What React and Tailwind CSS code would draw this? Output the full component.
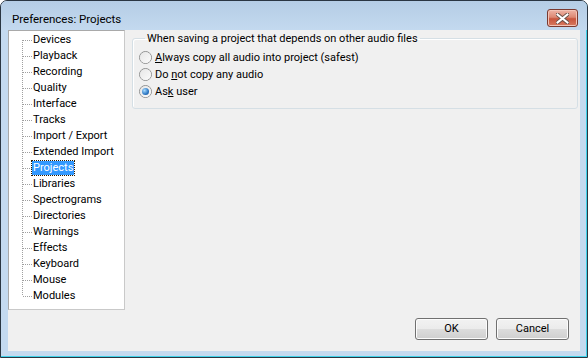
import React from "react";

const PAGES = [
  "Devices", "Playback", "Recording", "Quality", "Interface", "Tracks",
  "Import / Export", "Extended Import", "Projects", "Libraries", "Spectrograms",
  "Directories", "Warnings", "Effects", "Keyboard", "Mouse", "Modules",
];

const font = { fontFamily: 'Roboto, "Liberation Sans", sans-serif' };

function Connector({ first, last }) {
  // dotted tree lines, one row tall
  return (
    <svg width="24" height="16" className="shrink-0">
      <line x1="13.5" y1={first ? 8 : 0} x2="13.5" y2={last ? 8 : 16}
        stroke="#a0a0a0" strokeDasharray="1 1" />
      <line x1="14" y1="8.5" x2="23" y2="8.5" stroke="#a0a0a0" strokeDasharray="1 1" />
    </svg>
  );
}

function Radio({ checked, children }) {
  return (
    <div className="flex items-center h-[17px]">
      <span className="w-[13px] h-[13px] rounded-full border border-[#8e8f8f] bg-[linear-gradient(135deg,#d0d0d0,#f6f6f6)] flex items-center justify-center">
        <span className="w-[11px] h-[11px] rounded-full bg-[linear-gradient(135deg,#e6e6e6,#fbfbfb)] flex items-center justify-center">
          {checked && (
            <span className="w-[7px] h-[7px] rounded-full bg-[radial-gradient(circle_at_35%_35%,#a9dcff,#2d78c4_60%,#1b4f8f)]" />
          )}
        </span>
      </span>
      <span className="ml-[3px] text-[11px] text-black leading-none whitespace-nowrap">{children}</span>
    </div>
  );
}

function Button({ children }) {
  return (
    <button className="w-[73px] h-[22px] rounded-[3px] border border-[#707070] bg-[linear-gradient(#f2f2f2_0%,#ebebeb_50%,#dddddd_50%,#cfcfcf_100%)] shadow-[inset_0_0_0_1px_#fcfcfc] text-[11px] text-black">
      {children}
    </button>
  );
}

export default function App() {
  return (
    <div style={font} className="w-[588px] h-[358px] flex flex-col rounded-t-[7px] border border-[#2a3642] bg-[#c4daf0] shadow-[inset_-1px_-1px_0_#3fd2ea] overflow-hidden">
      {/* title bar */}
      <div className="h-[29px] flex items-start bg-[linear-gradient(#b5cde5,#c3d9ef)]">
        <div className="pl-[11px] pt-[10px] text-[11.5px] text-black leading-[16px] whitespace-nowrap">Preferences: Projects</div>
        <div className="ml-auto mr-[9px] mt-[8px] w-[31px] h-[18px] rounded-[3px] border border-[#7a3a30] bg-[linear-gradient(#eeb4a6_0%,#dd8873_45%,#c8553d_55%,#d77a60_100%)] shadow-[inset_0_0_0_1px_#f3c3b6] flex items-center justify-center">
          <svg width="13" height="11" viewBox="0 0 13 11">
            <path d="M1.5 1.5 L11.5 9.5 M11.5 1.5 L1.5 9.5" stroke="#6a5048" strokeWidth="4" strokeLinecap="square" />
            <path d="M1.5 1.5 L11.5 9.5 M11.5 1.5 L1.5 9.5" stroke="#ffffff" strokeWidth="2" strokeLinecap="square" />
          </svg>
        </div>
      </div>

      {/* client area */}
      <div className="mx-[7px] mb-[6px] flex-1 bg-[#f0f0f0] flex flex-col">
        <div className="flex">
          <div className="w-[117px] h-[280px] bg-white border border-[#a9a9a9] border-r-[#c9c9c9] border-b-[#c9c9c9] pt-[1px]">
            {PAGES.map((p, i) => (
              <div key={p} className="flex h-[16px] items-center">
                <Connector first={i === 0} last={i === PAGES.length - 1} />
                {p === "Projects" ? (
                  <span className="text-[11px] leading-[14px] px-[1px] text-white bg-[#3399ff] outline outline-1 outline-dotted outline-[#2b1a00] -ml-[1px] whitespace-nowrap">{p}</span>
                ) : (
                  <span className="text-[11px] leading-[14px] text-black whitespace-nowrap">{p}</span>
                )}
              </div>
            ))}
          </div>

          <fieldset className="ml-[7px] mt-[1px] w-[446px] h-[78px] border border-[#d5dfe5] rounded-[3px] shadow-[inset_1px_1px_0_#ffffff] pl-[6px] pt-[3px]">
            <legend className="ml-[6px] px-[2px] text-[11px] leading-[15px] text-black whitespace-nowrap">
              When saving a project that depends on other audio files
            </legend>
            <Radio><u>A</u>lways copy all audio into project (safest)</Radio>
            <Radio>Do <u>n</u>ot copy any audio</Radio>
            <Radio checked>As<u>k</u> user</Radio>
          </fieldset>
        </div>

        <div className="mt-[8px] flex justify-end gap-[8px] pr-[11px]">
          <Button>OK</Button>
          <Button>Cancel</Button>
        </div>
      </div>
    </div>
  );
}
